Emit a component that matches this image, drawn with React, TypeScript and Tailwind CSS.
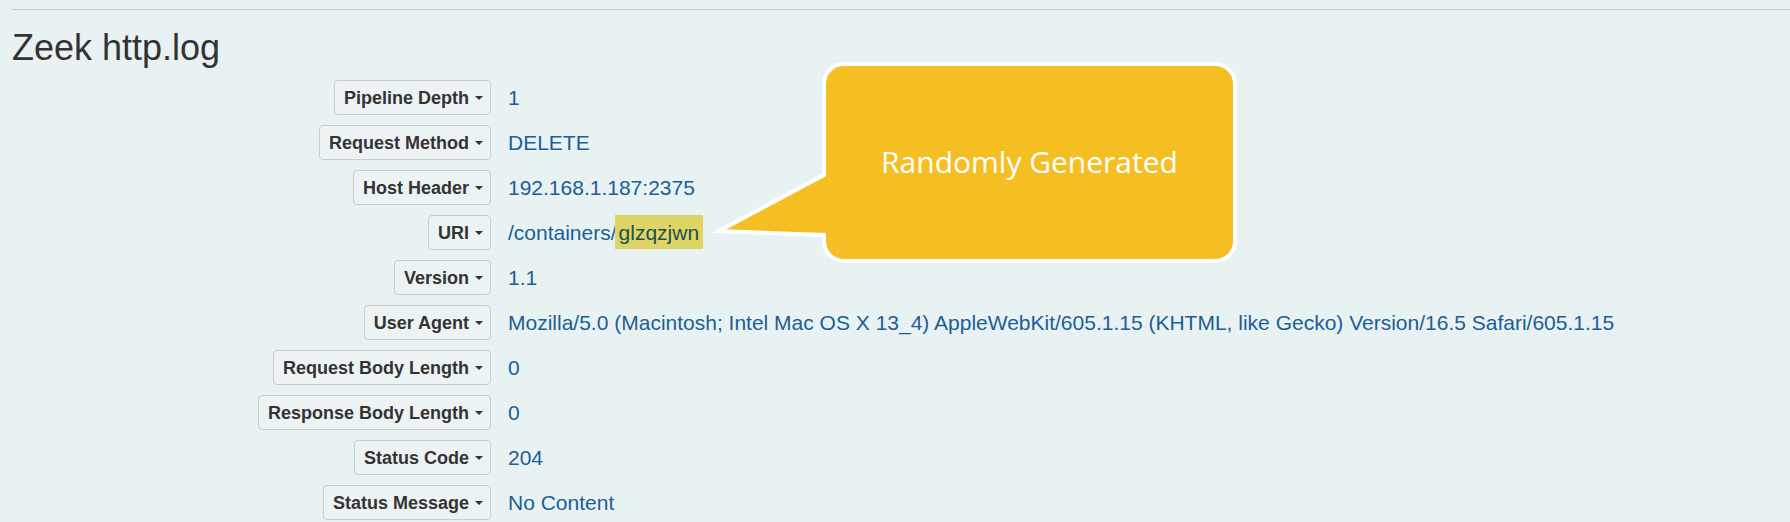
const fields: { label: string; value: string; highlight?: string }[] = [
  { label: "Pipeline Depth", value: "1" },
  { label: "Request Method", value: "DELETE" },
  { label: "Host Header", value: "192.168.1.187:2375" },
  { label: "URI", value: "/containers/", highlight: "glzqzjwn" },
  { label: "Version", value: "1.1" },
  {
    label: "User Agent",
    value:
      "Mozilla/5.0 (Macintosh; Intel Mac OS X 13_4) AppleWebKit/605.1.15 (KHTML, like Gecko) Version/16.5 Safari/605.1.15",
  },
  { label: "Request Body Length", value: "0" },
  { label: "Response Body Length", value: "0" },
  { label: "Status Code", value: "204" },
  { label: "Status Message", value: "No Content" },
];

function FieldButton({ label }: { label: string }) {
  return (
    <button className="justify-self-end inline-flex items-center h-[35px] pl-[9px] pr-[7px] border border-[#c8cdcd] rounded-[4px] bg-[#ecf3f4] text-[18px] font-bold text-[#333] leading-none">
      <span>{label}</span>
      <span className="ml-[6px] w-0 h-0 border-t-[4px] border-x-[4px] border-t-[#333] border-x-transparent" />
    </button>
  );
}

function Callout() {
  return (
    <div className="absolute left-[700px] top-[55px] w-[545px] h-[215px]">
      <svg width="545" height="215" viewBox="0 0 545 215" className="absolute inset-0">
        <path
          d="M144,9 H515 A20,20 0 0 1 535,29 V186 A20,20 0 0 1 515,206 H144 A20,20 0 0 1 124,186 V180 L19,176 L124,120 V29 A20,20 0 0 1 144,9 Z"
          fill="#f5bf24"
          stroke="#ffffff"
          strokeWidth="4"
          strokeLinejoin="miter"
        />
      </svg>
      <div className="absolute left-[124px] top-[9px] w-[411px] h-[197px] flex items-center justify-center">
        <span className="text-white text-[30px] font-['Open_Sans',sans-serif] leading-none pb-[2px]">
          Randomly Generated
        </span>
      </div>
    </div>
  );
}

export default function App() {
  return (
    <div className="relative min-h-screen h-[522px] overflow-hidden bg-[#e9f2f3] font-['Liberation_Sans',Arial,sans-serif] pl-[12px]">
      <div className="pt-[9px]">
        <div className="h-px bg-[#c6cbcb]" />
      </div>
      <h1 className="mt-[17.5px] text-[36px] leading-[40px] text-[#333] font-normal">Zeek http.log</h1>

      <div className="mt-[12.5px] grid grid-cols-[479px_1fr] gap-x-[17px] gap-y-[10px] items-center">
        {fields.map((f) => (
          <div key={f.label} className="contents">
            <FieldButton label={f.label} />
            <div className="h-[35px] flex items-center text-[21px] text-[#1b5e96] whitespace-nowrap leading-[24px]">
              <span>
                {f.value}
                {f.highlight && (
                  <mark className="-ml-[2px] bg-[#dfd565] text-[#1e5050] px-[4px] py-[5.5px]">{f.highlight}</mark>
                )}
              </span>
            </div>
          </div>
        ))}
      </div>

      <Callout />
    </div>
  );
}
